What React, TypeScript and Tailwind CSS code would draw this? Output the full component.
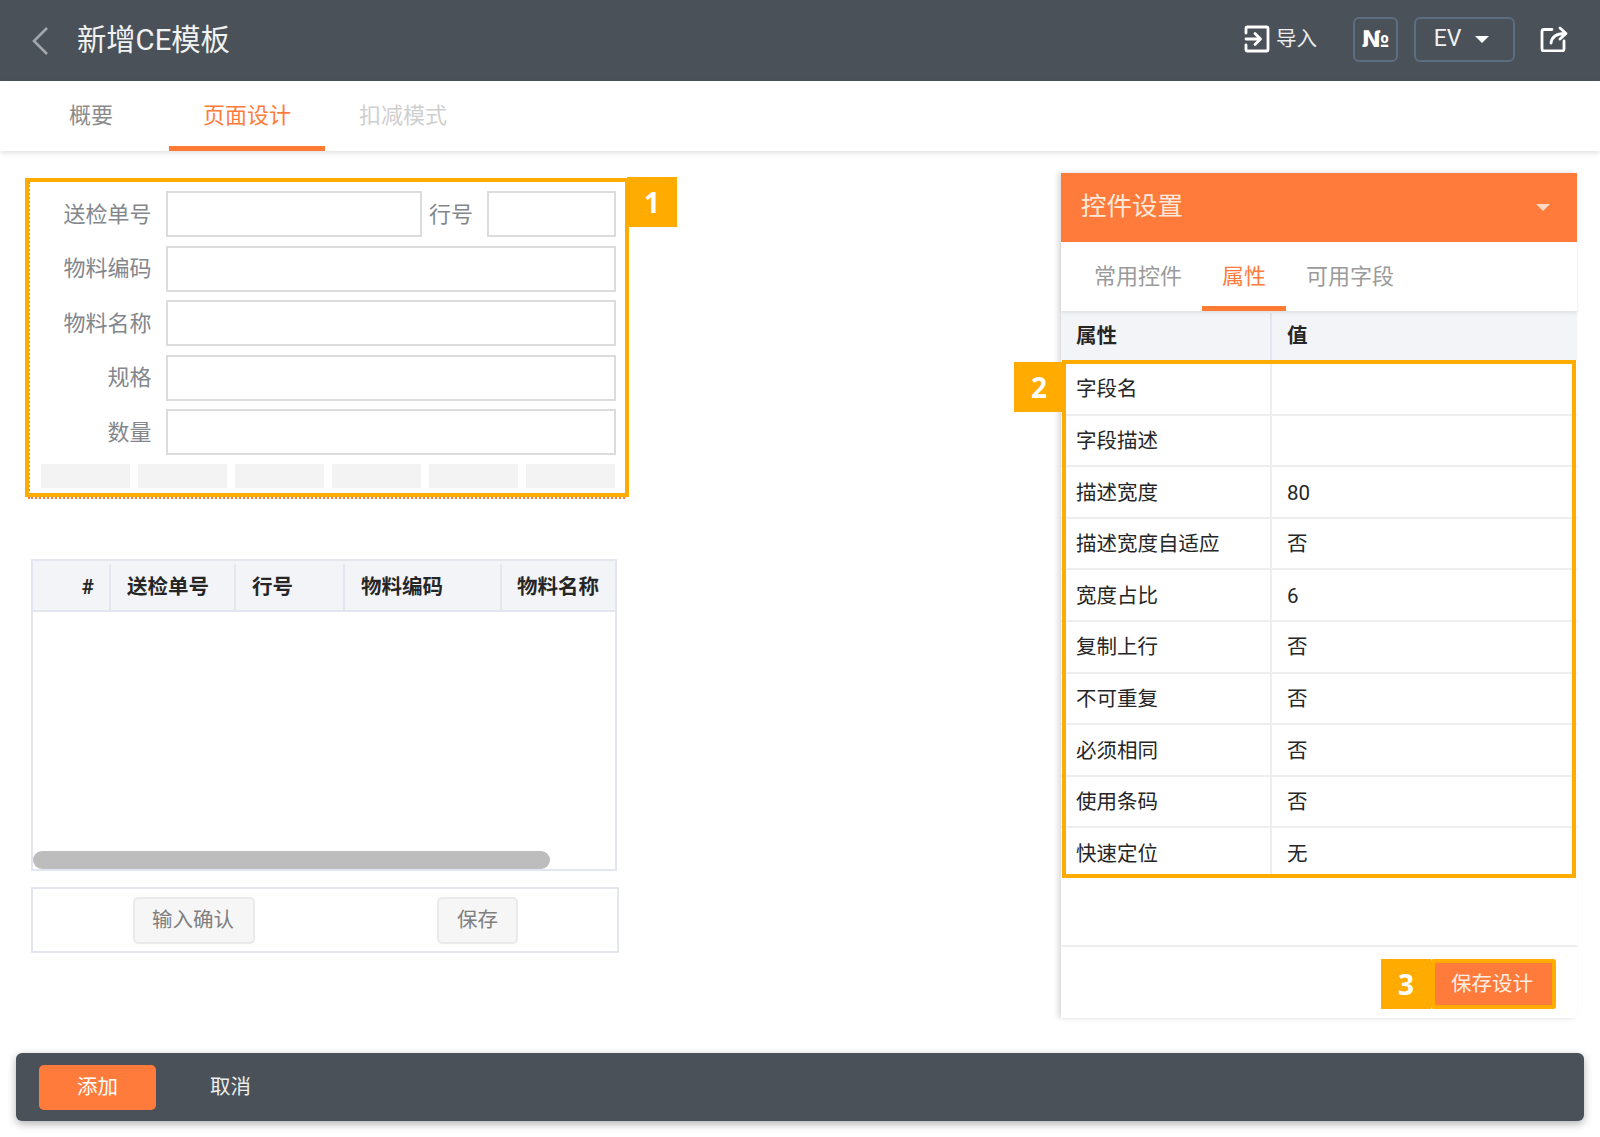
import React from "react";

const FONT = 'font-[Roboto,"Noto_Sans_CJK_SC",sans-serif]';

function Badge({ n, className }: { n: string; className: string }) {
  return (
    <div
      className={`absolute flex h-[50px] w-[50px] items-center justify-center bg-[#ffab00] font-['Open_Sans',sans-serif] text-[28px] font-bold text-white ${className}`}
    >
      {n}
    </div>
  );
}

function FieldRow({ label, children }: { label: string; children?: React.ReactNode }) {
  return (
    <div className="flex h-[46px] items-center">
      <div className="w-[121.500px] shrink-0 text-right text-[22px] text-[#83878c]">{label}</div>
      <div className="ml-[14.500px] h-full flex-1 border-2 border-[#dcdcdc] bg-white" />
      {children}
    </div>
  );
}

const props: [string, string][] = [
  ["字段名", ""],
  ["字段描述", ""],
  ["描述宽度", "80"],
  ["描述宽度自适应", "否"],
  ["宽度占比", "6"],
  ["复制上行", "否"],
  ["不可重复", "否"],
  ["必须相同", "否"],
  ["使用条码", "否"],
  ["快速定位", "无"],
];

export default function App() {
  return (
    <div className={`flex h-[1137px] w-[1600px] flex-col overflow-hidden bg-white ${FONT}`}>
      {/* Header */}
      <header className="flex h-[81px] shrink-0 items-center bg-[#4b5158] text-white">
        <svg width="18" height="30" viewBox="0 0 18 30" className="ml-[31px]" fill="none" stroke="#a3a7ab" strokeWidth="2.6">
          <path d="M16 2 3 15l13 13" />
        </svg>
        <div className="ml-[28px] text-[29.3px] leading-none text-[#f1f2f2]">新增CE模板</div>
        <div className="mb-[3px] ml-auto flex items-center">
          <svg width="26" height="28" viewBox="0 0 26 28" fill="none" stroke="white" strokeWidth="2.8" strokeLinejoin="round" strokeLinecap="round">
            <path d="M2 8V3.5C2 2.6 2.6 2 3.5 2h19c.9 0 1.5.6 1.5 1.5v21c0 .9-.6 1.5-1.5 1.5h-19C2.6 26 2 25.400 2 24.500V20" />
            <path d="M2 14h14M11 8.500 16.500 14 11 19.500" />
          </svg>
          <span className="ml-[6px] text-[20.5px] text-[#eceded]">导入</span>
          <div className="ml-[36px] flex h-[45px] w-[45px] items-center justify-center rounded-[6px] border-2 border-[#5b6d80] font-['DejaVu_Sans',sans-serif] text-[23px] font-bold text-white">
            №
          </div>
          <div className="ml-[16px] flex h-[45px] w-[101px] items-center justify-center rounded-[6px] border-2 border-[#5b6d80] pr-[6px] text-[23px] text-[#f1f2f2]">
            EV
            <span className="ml-[14px] h-0 w-0 border-x-[7px] border-t-[7px] border-x-transparent border-t-white" />
          </div>
          <svg width="28" height="26" viewBox="0 0 28 26" className="ml-[25px] mr-[32px]" fill="none" stroke="white" strokeWidth="2.8" strokeLinecap="round" strokeLinejoin="round">
            <path d="M12 3.500H4C2.800 3.500 2 4.300 2 5.500v17.500C2 24.200 2.800 25 4 25h18c1.200 0 2-.8 2-2v-8" />
            <path d="M11 17c.8-6 5-9.500 14-9.500M20 2l6 5.500-6 5.500" />
          </svg>
        </div>
      </header>

      {/* Tabs */}
      <nav className="z-10 flex h-[70px] shrink-0 items-stretch bg-white pl-[35px] text-[22px] shadow-[0_2px_5px_rgba(0,0,0,0.12)]">
        <div className="mr-[22px] flex items-center px-[34px] pb-[2px] text-[#8c8c8c]">概要</div>
        <div className="flex items-center border-b-[5px] border-[#ff7b33] px-[34px] pt-[3px] text-[#ff7b3b]">页面设计</div>
        <div className="flex items-center px-[34px] pb-[2px] text-[#cfcfcf]">扣减模式</div>
      </nav>

      {/* Main */}
      <main className="flex flex-1 justify-between">
        <section className="ml-[28px] mt-[31px] flex w-[597px] flex-col">
          <div className="relative flex h-[317px] flex-col gap-[8.6px] border-b-2 border-l-2 border-dotted border-[#ff7b33] pr-[9px] pt-[9px]">
            <FieldRow label="送检单号">
              <div className="ml-[7px] w-[58px] text-[22px] text-[#83878c]">行号</div>
              <div className="h-full w-[129px] shrink-0 border-2 border-[#dcdcdc]" />
            </FieldRow>
            <FieldRow label="物料编码" />
            <FieldRow label="物料名称" />
            <FieldRow label="规格" />
            <FieldRow label="数量" />
            <div className="flex h-[24px] gap-[8px] pl-[11px] pr-[1px]">
              {[0, 1, 2, 3, 4, 5].map((i) => (
                <div key={i} className="flex-1 bg-[#f3f3f3]" />
              ))}
            </div>
            <div className="pointer-events-none absolute -left-[5px] -right-[4px] -top-[4px] bottom-0 border-[4px] border-[#ffab00]" />
            <Badge n="1" className="-top-[5px] left-[597px]" />
          </div>

          <div className="ml-[3px] mt-[60px] flex h-[312px] w-[586px] flex-col border-2 border-[#e3e6ee]">
            <div className="flex h-[49px] shrink-0 bg-[#f2f4f8] pt-[3px] text-[20.5px] font-bold text-[#262626]">
              <div className="flex w-[78px] items-center justify-end border-r-2 border-[#e3e6ee] pr-[15px]">#</div>
              <div className="flex w-[125px] items-center border-r-2 border-[#e3e6ee] pl-[16px]">送检单号</div>
              <div className="flex w-[109px] items-center border-r-2 border-[#e3e6ee] pl-[16px]">行号</div>
              <div className="flex w-[157px] items-center border-r-2 border-[#e3e6ee] pl-[16px]">物料编码</div>
              <div className="flex flex-1 items-center pl-[15px]">物料名称</div>
            </div>
            <div className="flex flex-1 flex-col justify-end border-t-2 border-[#e3e6ee]">
              <div className="h-[18px] w-[517px] rounded-full bg-[#bdbdbd]" />
            </div>
          </div>

          <div className="ml-[3px] mt-[16px] flex h-[66px] w-[588px] items-center border-2 border-[#e3e6ee] text-[20.5px] text-[#7f7f7f]">
            <div className="ml-[100px] flex h-[47px] w-[122px] items-center justify-center rounded-[5px] border-2 border-[#eaeaea] bg-[#f6f6f6] pr-[2px] pt-[1px]">输入确认</div>
            <div className="ml-[182px] flex h-[47px] w-[81px] items-center justify-center rounded-[5px] border-2 border-[#eaeaea] bg-[#f6f6f6] pt-[1px]">保存</div>
          </div>
        </section>

        <aside className="mr-[23px] mt-[22px] flex h-[845px] w-[516px] flex-col bg-white shadow-[-3px_0_5px_rgba(0,0,0,0.14)]">
          <div className="flex h-[69px] shrink-0 items-center justify-between bg-[#ff7b3b] pb-[3px] pl-[20px] pr-[27px]">
            <span className="text-[25.5px] text-[#ffe9dd]">控件设置</span>
            <span className="mt-[3px] h-0 w-0 border-x-[7px] border-t-[7px] border-x-transparent border-t-[#ffd9c4]" />
          </div>
          <div className="z-10 flex h-[69px] shrink-0 items-stretch pl-[13px] text-[22px] text-[#9a9a9a] shadow-[0_2px_3px_rgba(0,0,0,0.08)]">
            <div className="flex items-center px-[20px]">常用控件</div>
            <div className="flex items-center border-b-[5px] border-[#ff7b33] px-[20px] pt-[5px] text-[#ff7b3b]">属性</div>
            <div className="flex items-center px-[20px]">可用字段</div>
          </div>
          <div className="flex h-[49px] shrink-0 bg-[#f2f4f8] pt-[2px] text-[20.5px] font-bold text-[#262626]">
            <div className="flex w-[211px] items-center border-r-2 border-[#e3e6ee] pl-[15px]">属性</div>
            <div className="flex flex-1 items-center pl-[15px]">值</div>
          </div>
          <div className="relative pt-[4px] text-[20.5px] text-[#262626]">
            {props.map(([k, v], i) => (
              <div key={k} className={`flex ${i < props.length - 1 ? "h-[51.6px] border-b-2 border-[#eeeeee]" : "h-[49.6px]"}`}>
                <div className="flex w-[211px] items-center border-r-2 border-[#eeeeee] pl-[15px] pt-[2px]">{k}</div>
                <div className="flex flex-1 items-center pl-[15px] pt-[2px]">{v}</div>
              </div>
            ))}
            <div className="pointer-events-none absolute inset-x-[1px] inset-y-0 border-[4px] border-[#ffab00]" />
            <Badge n="2" className="-left-[47px] top-[2px]" />
          </div>
          <div className="mt-auto flex h-[73px] shrink-0 items-start justify-end border-t-2 border-[#eeeeee] pr-[21px] pt-[12px]">
            <div className="relative flex h-[50px] w-[125px] items-center justify-center rounded-[3px] border-[4px] border-[#ffab00] bg-[#ff7b3b] pr-[3px] text-[20.5px] text-[#ffeee5]">
              保存设计
              <Badge n="3" className="-left-[54px] -top-[4px]" />
            </div>
          </div>
        </aside>
      </main>

      {/* Footer */}
      <footer className="mx-[16px] mb-[16px] flex h-[68px] shrink-0 items-center rounded-[6px] bg-[#4b5158] pl-[23px] text-[20.5px] text-[#eceded] shadow-[0_3px_8px_rgba(0,0,0,0.3)]">
        <div className="flex h-[45px] w-[117px] items-center justify-center rounded-[5px] bg-[#ff7b3b] text-white">添加</div>
        <div className="ml-[54px]">取消</div>
      </footer>
    </div>
  );
}
